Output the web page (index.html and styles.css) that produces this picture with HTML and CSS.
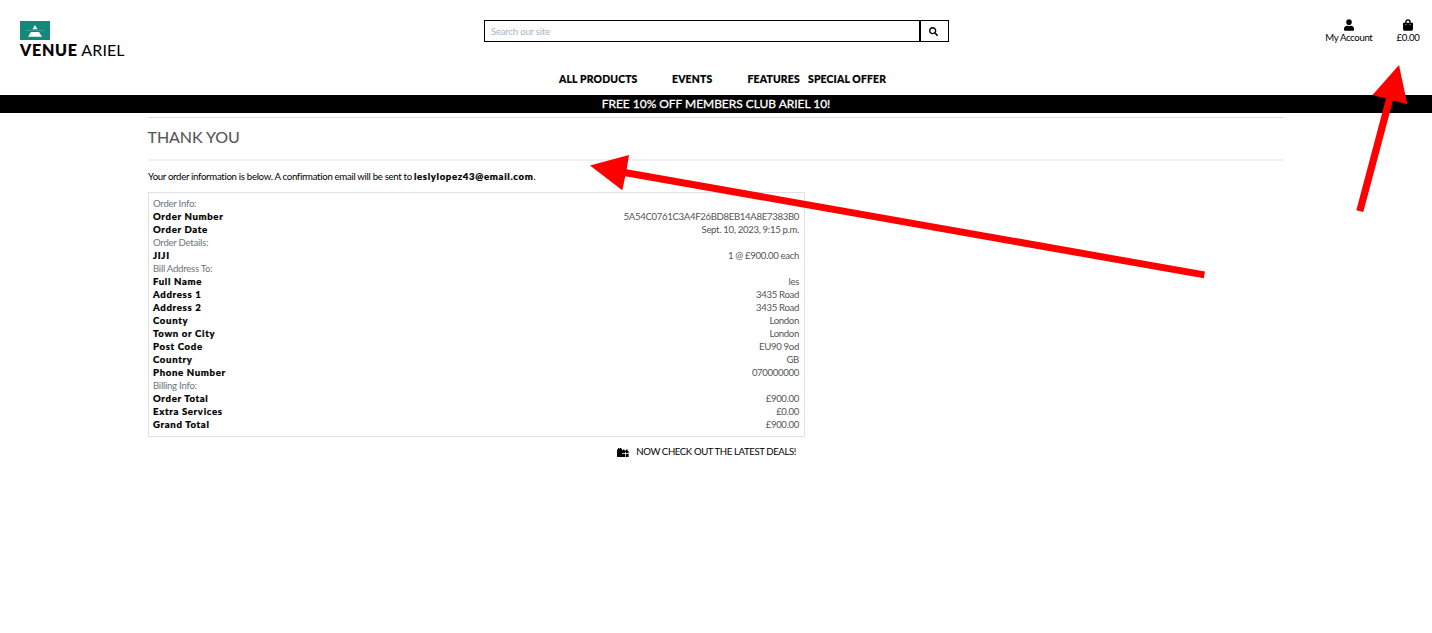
FILE: index.html
```html
<!DOCTYPE html>
<html lang="en">
<head>
<meta charset="utf-8">
<title>Venue Ariel</title>
<link rel="stylesheet" href="styles.css">
</head>
<body>
<header class="header">
  <a class="brand">
    <svg class="logo" viewBox="0 0 30 19"><rect width="30" height="19" fill="#14897b"/><path d="M15 4l2.500 4.300h-5z" fill="#fff"/><path d="M5.500 9.500h19" stroke="#4fa69b" stroke-width=".7"/><path d="M13.500 9.500h3" stroke="#3c78b8"/><path d="M11 11h8l3 4.700H8z" fill="#fff"/></svg>
    <span class="brand-name"><b>VENUE</b> <span class="brand-second">ARIEL</span></span>
  </a>
  <form class="search">
    <input class="search-input" type="text" placeholder="Search our site">
    <button class="search-button" type="button" aria-label="Search"><svg width="9" height="9" viewBox="0 0 512 512"><path d="M505 442.700L405.300 343c-4.500-4.500-10.600-7-17-7H372c27.600-35.300 44-79.700 44-128C416 93.100 322.900 0 208 0S0 93.100 0 208s93.100 208 208 208c48.300 0 92.700-16.400 128-44v16.300c0 6.400 2.500 12.500 7 17l99.700 99.700c9.400 9.400 24.600 9.400 33.900 0l28.300-28.300c9.400-9.400 9.400-24.600.1-34zM208 336c-70.700 0-128-57.200-128-128 0-70.700 57.200-128 128-128 70.700 0 128 57.200 128 128 0 70.700-57.200 128-128 128z"/></svg></button>
  </form>
  <div class="account">
    <a class="account-link user"><svg width="10" height="12" viewBox="0 0 448 512"><path d="M224 256c70.700 0 128-57.300 128-128S294.700 0 224 0 96 57.300 96 128s57.300 128 128 128zm89.600 32h-16.700c-22.200 10.200-46.900 16-72.900 16s-50.600-5.800-72.900-16h-16.700C60.200 288 0 348.200 0 422.400V464c0 26.500 21.500 48 48 48h352c26.500 0 48-21.500 48-48v-41.600c0-74.200-60.200-134.400-134.400-134.400z"/></svg><span class="my-account">My Account</span></a>
    <a class="account-link bag"><svg width="10" height="12" viewBox="0 0 448 512"><path d="M352 160v-32C352 57.400 294.600 0 224 0S96 57.400 96 128v32H0v272c0 44.200 35.800 80 80 80h288c44.200 0 80-35.800 80-80V160h-96zm-192-32c0-35.300 28.700-64 64-64s64 28.700 64 64v32H160v-32zm160 120a24 24 0 110-48 24 24 0 010 48zm-192 0a24 24 0 110-48 24 24 0 010 48z"/></svg><span class="bag-total">£0.00</span></a>
  </div>
</header>
<nav class="nav"><a class="n1">ALL PRODUCTS</a><a class="n2">EVENTS</a><a class="n3">FEATURES</a><a class="n4">SPECIAL OFFER</a></nav>
<div class="banner"><span class="banner-text">FREE 10% OFF MEMBERS CLUB ARIEL 10!</span></div>
<main class="main">
  <h2 class="title"><span>THANK YOU</span></h2>
  <p class="note"><span class="note-text">Your order information is below. A confirmation email will be sent to</span> <b class="email">leslylopez43@email.com</b>.</p>
  <section class="order">
    <div class="group">Order Info:</div>
    <div class="row"><b>Order Number</b><span class="hash">5A54C0761C3A4F26BD8EB14A8E7383B0</span></div>
    <div class="row"><b>Order Date</b><span>Sept. 10, 2023, 9:15 p.m.</span></div>
    <div class="group">Order Details:</div>
    <div class="row"><b>JIJI</b><span>1 @ £900.00 each</span></div>
    <div class="group">Bill Address To:</div>
    <div class="row"><b>Full Name</b><span>les</span></div>
    <div class="row"><b>Address 1</b><span>3435 Road</span></div>
    <div class="row"><b>Address 2</b><span>3435 Road</span></div>
    <div class="row"><b>County</b><span>London</span></div>
    <div class="row"><b>Town or City</b><span>London</span></div>
    <div class="row"><b>Post Code</b><span>EU90 9od</span></div>
    <div class="row"><b>Country</b><span>GB</span></div>
    <div class="row"><b>Phone Number</b><span>070000000</span></div>
    <div class="group">Billing Info:</div>
    <div class="row"><b>Order Total</b><span>£900.00</span></div>
    <div class="row"><b>Extra Services</b><span>£0.00</span></div>
    <div class="row"><b>Grand Total</b><span>£900.00</span></div>
  </section>
  <a class="deals"><svg width="12" height="9" viewBox="0 0 12 9"><path d="M0 2l1-1V0h1v1l1-1h1l1.500 2.300H6V1.500h1.500v1h1.500v-1h1.500v1H11l.6 1V5.300H8.800V4H8v1.300H5V9H0zM5 6h3v3H5zM8.700 6h2.900v3H8.700z"/></svg><span class="deals-text">NOW CHECK OUT THE LATEST DEALS!</span></a>
</main>
<svg class="arrows" width="1432" height="633" fill="#f00"><path d="M590 165.500L629 155L626.700 169.300L1205 271.500L1203.800 278.300L625.300 176.200L622.300 190.300z"/><path d="M1399 65L1407.300 104.300L1393 100.500L1363.300 212L1356.300 210.300L1386 98.500L1372.500 95z"/></svg>
</body>
</html>
```
FILE: styles.css
```css
* { box-sizing: border-box; }
body { margin: 0; position: relative; height: 633px; overflow: hidden; background: #fff; color: #000; font: 9.6px/13px Lato, sans-serif; letter-spacing: -.33px; white-space: nowrap; }
b { font-weight: 900; letter-spacing: .65px; -webkit-text-stroke: .2px #000; }
.header { display: grid; grid-template-columns: 484px 465px 1fr; height: 72px; }
.brand { padding: 21px 0 0 20px; display: flex; flex-direction: column; }
.logo { width: 30px; height: 19px; display: block; }
.brand-name { font-size: 16px; line-height: 20px; letter-spacing: .1px; }
.brand-name b { font-weight: 900; letter-spacing: .75px; }
.search { display: flex; height: 22px; margin-top: 20px; }
.search-input { width: 436px; border: 1px solid #000; border-right: 0; padding: 0 6px; font: 9.6px Lato, sans-serif; letter-spacing: -.22px; border-radius: 0; }
.search-input::placeholder { color: #a5b6c8; opacity: 1; }
.search-button { width: 30px; margin-left: -1px; border: 1px solid #000; border-left-width: 2px; background: #fff; padding: 1px 2px 0 0; display: flex; align-items: center; justify-content: center; }
.account { display: flex; justify-content: flex-end; gap: 24px; padding: 19px 12.5px 0 0; }
.account-link { display: flex; flex-direction: column; align-items: center; }
.bag { letter-spacing: -.3px; }
.nav { display: flex; height: 23px; padding-left: 559px; font-weight: 900; font-size: 10.4px; line-height: 15px; letter-spacing: .18px; -webkit-text-stroke: .2px #000; }
.n1 { width: 113px; }
.n2 { width: 75.5px; }
.n3 { width: 60.5px; }
.banner { height: 18px; background: #000; color: #fff; text-align: center; font-size: 12px; line-height: 18px; letter-spacing: -.04px; -webkit-text-stroke: .3px #fff; }
.main { margin: 4px 148px 0; }
.title { margin: 0; height: 44px; border-top: 1px solid #e0e0e0; border-bottom: 2px solid #f0f0f0; color: #555; font-size: 16px; letter-spacing: -.05px; font-weight: 400; line-height: 38px; -webkit-text-stroke: .1px #555; }
.title span { margin-left: -.5px; }
.note { margin: 9px 0 9px; }
.note-text { letter-spacing: -.3px; }
.order { width: 657px; height: 245px; border: 1px solid #dee2e6; padding: 4px 5px 0 4px; }
.group { color: #6c757d; letter-spacing: -.25px; }
.row { display: flex; justify-content: space-between; color: #555; }
.row b { color: #000; }
.deals { display: flex; width: 648px; justify-content: flex-end; align-items: center; gap: 7px; margin-top: 8px; letter-spacing: -.39px; }
.deals svg { margin-top: 2px; }
.arrows { position: absolute; left: 0; top: 0; pointer-events: none; }
```
